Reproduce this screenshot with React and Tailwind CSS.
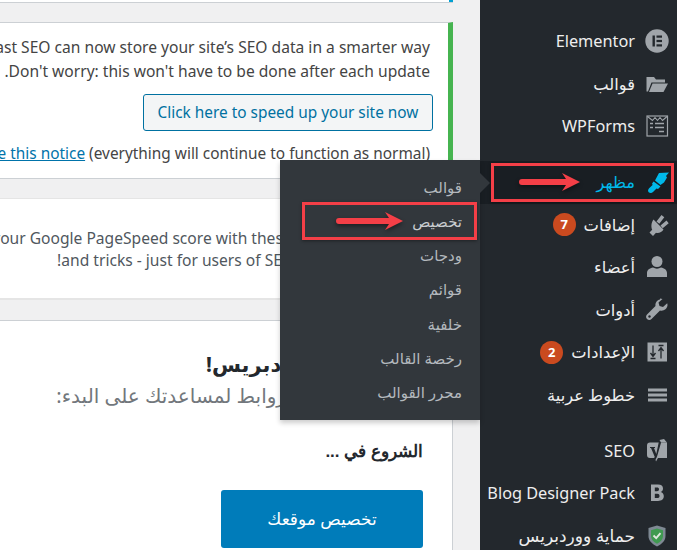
const Ico = ({ children, c = "#a0a5aa" }) => (
  <svg width="24" height="24" viewBox="0 0 24 24" fill={c} className="shrink-0">{children}</svg>
);
const icons = {
  el: (c) => <Ico c={c}><circle cx="12" cy="12" r="11.7" /><rect x="7.5" y="6.5" width="2.4" height="11" fill="#23282d" /><rect x="11.5" y="6.5" width="5.5" height="2.2" fill="#23282d" /><rect x="11.5" y="10.9" width="5.5" height="2.2" fill="#23282d" /><rect x="11.5" y="15.3" width="5.5" height="2.2" fill="#23282d" /></Ico>,
  folder: (c) => <Ico c={c}><path d="M1.500 5h7.500l2 2.500h9v3H6.500L3 19.500H1.500z" /><path d="M7.500 11.500H23l-4.500 8.500H4z" /></Ico>,
  forms: (c) => <Ico c="none"><rect x="2" y="2" width="20.500" height="20" stroke={c} strokeWidth="1.200" /><path d="M2.500 2.500l5 4 2.500-3 2.500 3 2.500-3 2.500 3 4.500-4" stroke={c} strokeWidth="1.100" /><path d="M5 9.500h3M10 9.500h9M5 13.500h3M10 13.500h9M14 17.500h5" stroke={c} strokeWidth="1.600" /></Ico>,
  brush: (c) => <Ico c={c}><path d="M10 10.500L14 3l10-.5-3 3.500 1 1.500-3 5-3.500 2.500z" /><path d="M8.500 11.500l7 5-2.500 2.500-1.500-.5-3.500 3.500c-1 1-3 1.300-4.300.2-1.200-1.200-.6-3 .4-4l3.500-3.200-.5-1.500z" /></Ico>,
  plug: (c) => <Ico c={c}><path d="M8.500 6.500l10 10c-1.500 2.500-4.500 4-7.500 3.300l-3 3.200-3.500-3.500 2.700-2.800C6 14 6 10 8.500 6.500z" /><path d="M11.500 8.500L16.500 2l2.800 2.200-5 6.500zM15.500 12.500l6-5 2.200 2.800-6 5z" /></Ico>,
  user: (c) => <Ico c={c}><circle cx="12" cy="6.500" r="5.500" /><path d="M2 22v-4c0-3 2.800-5 6-5.500 2.500 1.500 5.500 1.500 8 0 3.200.5 6 2.500 6 5.500v4z" /></Ico>,
  wrench: (c) => <Ico c={c}><path d="M15 1.500c-3 .5-5 3.500-4.500 6.500L2 16.500c-1.500 1.500-1 3.500 0 4.500s3.200 1.500 4.500 0l8.500-8.500c3.500 1 7-1.500 7.500-5 0-.8 0-1.500-.3-2.300L18 9l-3.500-1-1-3.500 4-3.500c-.8-.300-1.700-.5-2.500-.5z" /><circle cx="4.500" cy="18.500" r="1.200" fill="#23282d" /></Ico>,
  sliders: (c) => <Ico c={c}><rect x="2.500" y="2.500" width="19.500" height="19" /><path d="M8 5.500v11M5.500 13l2.500 3.500 2.500-3.500M5.500 18.500h5M16 18.500v-11M13.500 11L16 7.500l2.500 3.500M13.500 5.500h5" fill="none" stroke="#23282d" strokeWidth="1.300" /></Ico>,
  menu: (c) => <Ico c={c}><rect x="3" y="5.500" width="19" height="3" /><rect x="3" y="10.500" width="19" height="3" /><rect x="3" y="15.500" width="19" height="3" /></Ico>,
  yoast: (c) => <Ico c={c}><path d="M5 3.500h17v15.500H13l-2 3.500-1-3.500H5c-2 0-3-1-3-3v-9.500c0-2 1-3 3-3z" /><path d="M5 8h5v1H9l2.300 6 2.700-13h2.500l-4 14c-1 3.500-2.500 6-5.500 6.500v-2c1.500-.5 2.300-1.500 2.700-2.800L6 9H5z" fill="#23282d" /><path d="M14.500 1L19 0l3 3.500h-6z" /></Ico>,
  b: (c) => <Ico c={c}><path fillRule="evenodd" d="M6 3.500h7c3.300 0 5 1.300 5 4 0 1.700-.9 3-2.300 3.500 1.900.5 3.100 2 3.100 4.100 0 3.300-2.300 4.900-5.800 4.900H6zm3.800 3v3.700h2.200c1.300 0 2-.7 2-1.900s-.7-1.800-2-1.800zm0 6.300V17h2.600c1.300 0 2.100-.8 2.100-2.100s-.8-2.100-2.100-2.100z" /></Ico>,
  shield: () => <svg width="24" height="24" viewBox="0 0 24 24" className="shrink-0"><path d="M12 1.500l8.500 2.500v8c0 4.500-3.500 8-8.500 10.500C7 20 3.500 16.500 3.500 12V4z" fill="#7e8993" /><path d="M12 4.500l6 1.800V12c0 3.300-2.500 5.800-6 7.800-3.500-2-6-4.500-6-7.800V6.300z" fill="#3f9a50" /><path d="M8.500 11.500l2.700 2.700 4.300-5" fill="none" stroke="#dfe8df" strokeWidth="1.900" /></svg>,
};

const Arrow = ({ w }) => (
  <svg width={w} height="22" viewBox={`0 0 ${w} 22`} className="drop-shadow-[0_2px_2px_rgba(0,0,0,0.45)]">
    <path d={`M3 8H${w - 15}L${w - 19} 2L${w - 1} 11L${w - 19} 20L${w - 15} 14H3a3 3 0 0 1 0-6z`} fill="#f43f47" />
  </svg>
);

const Row = ({ icon, label, badge, active, mt, big }) => (
  <div className={`relative flex h-[42.5px] items-center gap-[10px] pr-[8px] ${big ? "text-[17px]" : "text-[16.3px]"} ${mt ? "mt-[13.5px]" : ""} ${active ? "bg-[#191e23] text-[#00b9eb] font-medium" : "text-[#eeeeee]"}`}>
    {icons[icon](active ? "#00b9eb" : "#a0a5aa")}
    <span className="whitespace-nowrap">{label}</span>
    {badge && (
      <span className="-mr-[2px] flex h-[23px] w-[23px] items-center justify-center rounded-full bg-[#ca4a1f] text-[13px] font-bold text-white">{badge}</span>
    )}
    {active && (
      <>
        <span className="absolute inset-y-[2px] left-[11px] right-[3px] border-[3px] border-[#f43f47] shadow-[0_1px_3px_rgba(0,0,0,0.4)]" />
        <span className="absolute left-[39px] top-[10px] flex"><Arrow w={62} /></span>
      </>
    )}
  </div>
);

const sub = ["قوالب", "تخصيص", "ودجات", "قوائم", "خلفية", "رخصة القالب", "محرر القوالب"];

export default function App() {
  return (
    <div dir="rtl" className="relative flex h-[550px] w-[677px] overflow-hidden bg-[#f0f0f1] font-['Noto_Sans','DejaVu_Sans',sans-serif]">
      <aside className="h-full w-[197px] shrink-0 bg-[#23282d] pt-[20px]">
        <Row icon="el" label="Elementor" />
        <Row icon="folder" label="قوالب" />
        <Row icon="forms" label="WPForms" />
        <Row icon="brush" label="مظهر" active mt />
        <Row icon="plug" label="إضافات" badge="7" />
        <Row icon="user" label="أعضاء" />
        <Row icon="wrench" label="أدوات" />
        <Row icon="sliders" label="الإعدادات" badge="2" />
        <Row icon="menu" label="خطوط عربية" />
        <Row icon="yoast" label="SEO" mt />
        <Row icon="b" label="Blog Designer Pack" />
        <Row icon="shield" label="حماية ووردبريس" big />
      </aside>

      <main className="min-w-0 flex-1 pr-[27px] text-[15.6px] text-[#444444]">
        <div className="h-[3px] border-b border-[#ccd0d4] bg-white">
          <div className="h-[2px] w-[4px] bg-[#00a0d2]" />
        </div>
        <section className="mt-[19px] h-[157px] border-r-[5px] border-t border-b border-[#ccd0d4] border-r-[#46b450] bg-white pr-[18px] pt-[12px] whitespace-nowrap">
          <p className="h-[24px] leading-[24px]">Yoast SEO can now store your site’s SEO data in a smarter way</p>
          <p className="h-[24px] leading-[24px]">Don't worry: this won't have to be done after each update.</p>
          <div className="mt-[11px] -mr-[3px] flex">
            <span className="flex h-[37px] w-[290px] items-center justify-center rounded-[3px] border border-[#0071a1] bg-[#f3f5f6] pt-[1px] text-[15.4px] text-[#0071a1]">Click here to speed up your site now</span>
          </div>
          <p className="mt-[11px] h-[24px] text-[15.4px] leading-[24px]"><a className="text-[#0073aa] underline">Hide this notice</a> (everything will continue to function as normal)</p>
        </section>
        <section className="mt-[19px] h-[102px] border-t border-b-2 border-[#e5e5e5] bg-white pr-[22px] pt-[28px] whitespace-nowrap text-[#50575e]">
          <p className="h-[22px] leading-[22px]">Improve your Google PageSpeed score with these simple tips to rank</p>
          <p className="h-[22px] leading-[22px]">and tricks - just for users of SEO Framework Plugin!</p>
        </section>
        <section className="mt-[20px] h-[240px] border-r border-t border-[#ccd0d4] bg-white pr-[29px] whitespace-nowrap">
          <h2 className="mt-[28px] text-[21px] font-bold leading-[30px] text-[#23282d]">مرحبا في ووردبريس!</h2>
          <p className="mt-[3px] text-[20px] leading-[28px] text-[#72777c]">جمعنا لك بعض الروابط لمساعدتك على البدء:</p>
          <h3 className="mt-[30px] font-['Liberation_Sans',sans-serif] text-[17px] font-bold leading-[24px] text-[#23282d]">الشروع في ...</h3>
          <div className="mt-[26px] flex">
            <span className="flex h-[58px] w-[202px] items-center justify-center rounded-[3px] bg-[#007cba] text-[17px] text-white">تخصيص موقعك</span>
          </div>
        </section>
      </main>

      <nav className="absolute left-[280px] top-[160px] h-[260px] w-[200px] bg-[#32373c] pr-[18px] pt-[10px] text-[15px] text-[#b4b9be] shadow-[0_3px_5px_rgba(0,0,0,0.2)]">
        {sub.map((s, i) => (
          <div key={s} className={`relative flex h-[34.2px] items-center ${i === 1 ? "text-[#c8ccd0]" : ""}`}>
            {s}
            {i === 1 && (
              <>
                <span className="absolute -top-[2px] -bottom-[2px] -right-[15px] left-[22px] border-[3px] border-[#f43f47] shadow-[0_1px_3px_rgba(0,0,0,0.4)]" />
                <span className="absolute left-[56px] top-[6px] flex"><Arrow w={68} /></span>
              </>
            )}
          </div>
        ))}
      </nav>
      <span className="absolute left-[480px] top-[173px] h-0 w-0 border-y-[10px] border-l-[10px] border-y-transparent border-l-[#32373c]" />
    </div>
  );
}
